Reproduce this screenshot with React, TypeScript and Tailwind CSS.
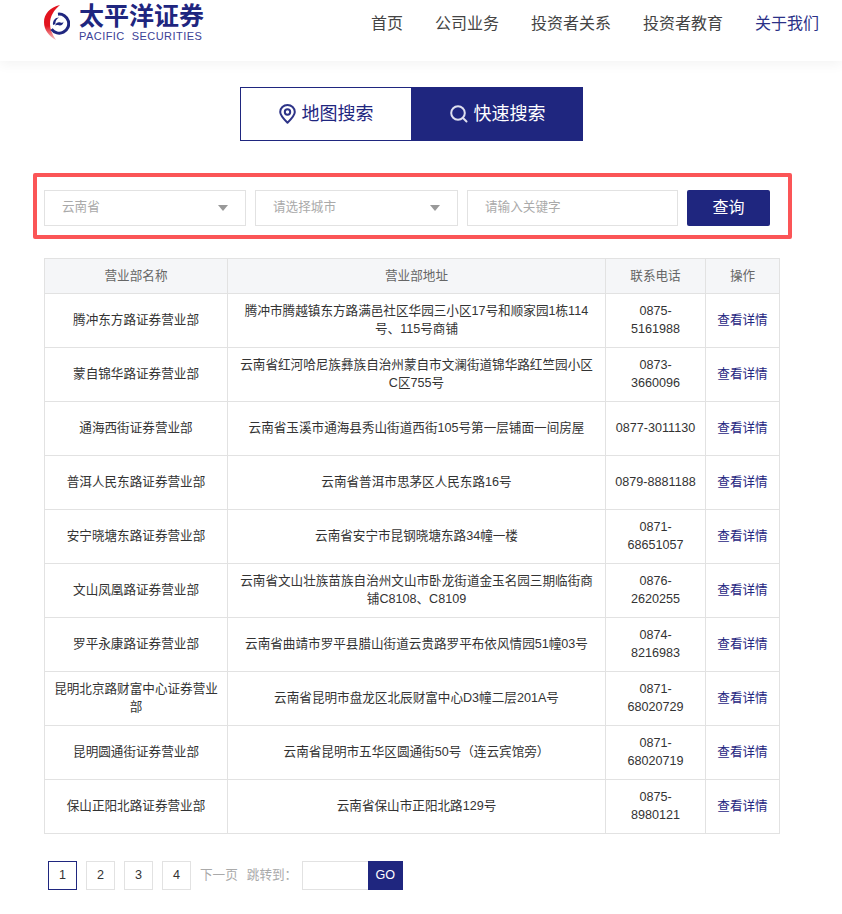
const NAV_ITEMS = ["首页", "公司业务", "投资者关系", "投资者教育", "关于我们"];

const BRANCHES: { name: string; address: string; phone: string }[] = [
  { name: "腾冲东方路证券营业部", address: "腾冲市腾越镇东方路满邑社区华园三小区17号和顺家园1栋114号、115号商铺", phone: "0875-\n5161988" },
  { name: "蒙自锦华路证券营业部", address: "云南省红河哈尼族彝族自治州蒙自市文澜街道锦华路红竺园小区C区755号", phone: "0873-\n3660096" },
  { name: "通海西街证券营业部", address: "云南省玉溪市通海县秀山街道西街105号第一层铺面一间房屋", phone: "0877-3011130" },
  { name: "普洱人民东路证券营业部", address: "云南省普洱市思茅区人民东路16号", phone: "0879-8881188" },
  { name: "安宁晓塘东路证券营业部", address: "云南省安宁市昆钢晓塘东路34幢一楼", phone: "0871-\n68651057" },
  { name: "文山凤凰路证券营业部", address: "云南省文山壮族苗族自治州文山市卧龙街道金玉名园三期临街商铺C8108、C8109", phone: "0876-\n2620255" },
  { name: "罗平永康路证券营业部", address: "云南省曲靖市罗平县腊山街道云贵路罗平布依风情园51幢03号", phone: "0874-\n8216983" },
  { name: "昆明北京路财富中心证券营业部", address: "云南省昆明市盘龙区北辰财富中心D3幢二层201A号", phone: "0871-\n68020729" },
  { name: "昆明圆通街证券营业部", address: "云南省昆明市五华区圆通街50号（连云宾馆旁）", phone: "0871-\n68020719" },
  { name: "保山正阳北路证券营业部", address: "云南省保山市正阳北路129号", phone: "0875-\n8980121" },
];

function Logo() {
  return (
    <div className="flex items-start gap-[9px]">
      <svg width="26" height="36" viewBox="0 0 26 36" className="mt-[2px]">
        <defs>
          <linearGradient id="crescent" x1="0" y1="0" x2="0" y2="1">
            <stop offset="0.6" stopColor="#e2141f" />
            <stop offset="1" stopColor="#f7c4c6" />
          </linearGradient>
        </defs>
        <path d="M16 0C6 2 0 9 0 17c0 8 5 14 12 18-4-6-6-11-6-16C6 11 10 5 16 0Z" fill="url(#crescent)" />
        <path d="M14 9.200a9.500 9.500 0 1 1-6.500 15" fill="none" stroke="#1f267f" strokeWidth="3" />
        <path d="M9 20c-.5-4 2-7.500 6-7.500-2.500 1.500-3.800 3.500-3.600 6.500Z" fill="#1f267f" />
        <path d="M11 20.500c1-3 3.500-4 5.500-3 1.500.7 2.500 0 3-1-.2 3-2.500 4.500-4.500 3.800-1.600-.5-3 -.5-4 .2Z" fill="#1f267f" />
      </svg>
      <div className="flex flex-col">
        <span className="text-[25px] leading-[27px] font-bold text-[#1f267f]">太平洋证券</span>
        <span className="text-[11px] leading-[13px] tracking-[0.45px] whitespace-pre text-[#3b4196]">PACIFIC  SECURITIES</span>
      </div>
    </div>
  );
}

function SelectBox({ label, width }: { label: string; width: string }) {
  return (
    <div className={`${width} h-9 border border-[#e2e2e2] pl-[17px] pr-[17px] flex items-center justify-between text-[#aaaaaa]`}>
      <span className="pb-[2px]">{label}</span>
      <span className="w-0 h-0 border-x-[5px] border-x-transparent border-t-[6px] border-t-[#999999]" />
    </div>
  );
}

export default function App() {
  return (
    <div className="w-[842px] h-[914px] overflow-hidden bg-white text-[12.6px] text-[#333333] font-['Liberation_Sans','Noto_Sans_CJK_SC',sans-serif]">
      {/* Header */}
      <header className="h-[61px] flex items-start justify-between pl-[44px] pr-[23px] pt-[3px] shadow-[0_3px_12px_rgba(0,0,0,0.05)]">
        <Logo />
        <nav className="flex gap-[32px] text-base text-[#444444] mt-[9px]">
          {NAV_ITEMS.map((item) => (
            <a key={item} href="#" className={item === "关于我们" ? "text-[#2b3188]" : ""}>
              {item}
            </a>
          ))}
        </nav>
      </header>

      {/* Tabs */}
      <div className="mt-[26px] ml-[240px] flex">
        <div className="w-[172px] h-[54px] border border-[#1f267f] flex items-center justify-center gap-[6px] text-lg text-[#1f267f]">
          <svg width="17" height="20" viewBox="0 0 17 20" fill="none" stroke="#2e3488" strokeWidth="2">
            <path d="M8.500 18.700C4.500 14.800 1.200 11.500 1.200 8a7.300 7 0 0 1 14.600 0c0 3.500-3.300 6.800-7.300 10.700Z" strokeLinejoin="round" />
            <circle cx="8.500" cy="8" r="2.700" />
          </svg>
          <span className="pb-[1px]">地图搜索</span>
        </div>
        <div className="w-[171px] h-[54px] bg-[#1f267f] flex items-center justify-center gap-[6px] text-lg text-white">
          <svg width="18" height="18" viewBox="0 0 18 18" fill="none" stroke="#dfe0ef" strokeWidth="2">
            <circle cx="8" cy="8" r="6.800" />
            <path d="M13 13l3.500 3.500" strokeLinecap="round" />
          </svg>
          <span className="pb-[1px]">快速搜索</span>
        </div>
      </div>

      {/* Search form */}
      <div className="mt-[32px] ml-[33px] w-[759px] h-[66px] border-[4px] border-[#fb5557] rounded-[2px] pl-[7px] pt-[13px] flex items-start gap-[9px]">
        <SelectBox label="云南省" width="w-[202px]" />
        <SelectBox label="请选择城市" width="w-[203px]" />
        <div className="w-[211px] h-9 border border-[#e2e2e2] pl-[17px] pb-[2px] flex items-center text-[#aaaaaa]">请输入关键字</div>
        <button className="w-[83px] h-9 rounded-[2px] bg-[#1f267f] text-white text-base">查询</button>
      </div>

      {/* Table */}
      <table className="mt-[19px] ml-[44px] w-[735px] table-fixed border-collapse text-center">
        <thead>
          <tr className="h-[35px] bg-[#f5f6f8] text-[#666666]">
            <th className="w-[183px] border border-[#e2e2e2] font-normal">营业部名称</th>
            <th className="w-[378px] border border-[#e2e2e2] font-normal">营业部地址</th>
            <th className="w-[100px] border border-[#e2e2e2] font-normal">联系电话</th>
            <th className="w-[74px] border border-[#e2e2e2] font-normal">操作</th>
          </tr>
        </thead>
        <tbody className="leading-[18px]">
          {BRANCHES.map((b) => (
            <tr key={b.name} className="h-[54px]">
              <td className="border border-[#e2e2e2] px-[9px] pb-[2px]">{b.name}</td>
              <td className="border border-[#e2e2e2] px-[12px] pb-[2px]">{b.address}</td>
              <td className="border border-[#e2e2e2] pb-[2px] whitespace-pre-line">{b.phone}</td>
              <td className="border border-[#e2e2e2] pb-[2px] text-[#1f267f]">查看详情</td>
            </tr>
          ))}
        </tbody>
      </table>

      {/* Pagination */}
      <div className="mt-[27px] ml-[48px] flex items-center">
        {[1, 2, 3, 4].map((p) => (
          <span
            key={p}
            className={`w-[29px] h-[29px] mr-[9px] pb-[1px] flex items-center justify-center border ${p === 1 ? "border-[#1f267f]" : "border-[#e2e2e2]"}`}
          >
            {p}
          </span>
        ))}
        <span className="text-[#aaaaaa]">下一页</span>
        <span className="ml-[9px] w-[55px] text-[#aaaaaa]">跳转到：</span>
        <div className="w-[66px] h-[29px] border border-[#e2e2e2] border-r-0" />
        <span className="w-[35px] h-[29px] bg-[#1f267f] text-white flex items-center justify-center">GO</span>
      </div>
    </div>
  );
}
